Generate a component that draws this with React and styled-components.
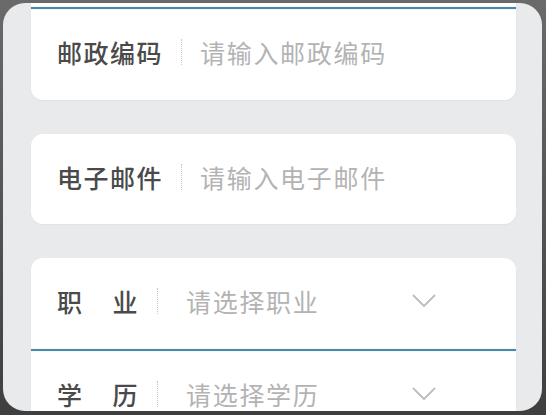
import React from "react";
import styled, { createGlobalStyle } from "styled-components";

const Global = createGlobalStyle`
  html, body { margin: 0; padding: 0; }
  body {
    width: 546px;
    height: 415px;
    overflow: hidden;
    background: #4e4e4e;
    font-family: "Noto Sans CJK SC", "Noto Sans", sans-serif;
  }
`;

const Frame = styled.div`
  width: 546px;
  height: 415px;
  padding: 3px 4px 4px 3px;
  box-sizing: border-box;
  background: linear-gradient(180deg, #6a6a6a, #3f3f3f);
`;

const Screen = styled.div`
  height: 100%;
  border-radius: 22px;
  background: #e9eaec;
  overflow: hidden;
  display: flex;
  flex-direction: column;
  gap: 34px;
  padding: 0 26px 0 28px;
  box-sizing: border-box;
`;

const Card = styled.div`
  background: #ffffff;
  border-radius: ${(p) => (p.$cut ? "0 0 12px 12px" : "12px")};
  padding-top: ${(p) => (p.$cut ? "4px" : "0")};
  display: flex;
  flex-direction: column;
  flex-shrink: 0;
  box-shadow: 0 1px 2px rgba(0, 0, 0, 0.04);
`;

const Separator = styled.div`
  height: 2px;
  background: #4a87ad;
  box-shadow: 0 0 1px rgba(74, 135, 173, 0.6);
`;

const Row = styled.div`
  height: ${(p) => p.$h || 90}px;
  display: flex;
  align-items: center;
  padding: 0 26px 5px 26px;
  box-sizing: border-box;
  line-height: 1.2;
`;

const Label = styled.div`
  width: ${(p) => p.$w}px;
  font-size: 25px;
  font-weight: 500;
  color: #4a4a4a;
  letter-spacing: 1.5px;
  white-space: nowrap;
  display: flex;
  justify-content: space-between;
  flex-shrink: 0;
`;

const Divider = styled.div`
  width: 0;
  height: 26px;
  border-left: 1px dotted #c4c4c4;
  margin: 0 ${(p) => p.$right}px 0 ${(p) => p.$left}px;
  flex-shrink: 0;
`;

const Placeholder = styled.div`
  flex: 1;
  font-size: 25px;
  color: #b3b3b3;
  letter-spacing: 1.7px;
  white-space: nowrap;
`;

const Chevron = styled.svg`
  width: 24px;
  height: 14px;
  margin-right: 54px;
  flex-shrink: 0;
`;

function Arrow() {
  return (
    <Chevron viewBox="0 0 24 14">
      <path d="M1.5 1.5 L12 12 L22.5 1.5" fill="none" stroke="#bdbdbd" strokeWidth="1.8" strokeLinecap="round" strokeLinejoin="round" />
    </Chevron>
  );
}

function InputRow({ label, placeholder, h }) {
  return (
    <Row $h={h}>
      <Label $w={108}>{label}</Label>
      <Divider $left={16} $right={18} />
      <Placeholder>{placeholder}</Placeholder>
    </Row>
  );
}

function SelectRow({ chars, placeholder, h }) {
  return (
    <Row $h={h}>
      <Label $w={82}>
        {chars.map((c) => (
          <span key={c}>{c}</span>
        ))}
      </Label>
      <Divider $left={18} $right={28} />
      <Placeholder>{placeholder}</Placeholder>
      <Arrow />
    </Row>
  );
}

export default function App() {
  return (
    <>
      <Global />
      <Frame>
        <Screen>
          <Card $cut>
            <Separator />
            <InputRow label="邮政编码" placeholder="请输入邮政编码" h={91} />
          </Card>
          <Card>
            <InputRow label="电子邮件" placeholder="请输入电子邮件" h={90} />
          </Card>
          <Card>
            <SelectRow chars={["职", "业"]} placeholder="请选择职业" h={91} />
            <Separator />
            <SelectRow chars={["学", "历"]} placeholder="请选择学历" h={90} />
          </Card>
        </Screen>
      </Frame>
    </>
  );
}
